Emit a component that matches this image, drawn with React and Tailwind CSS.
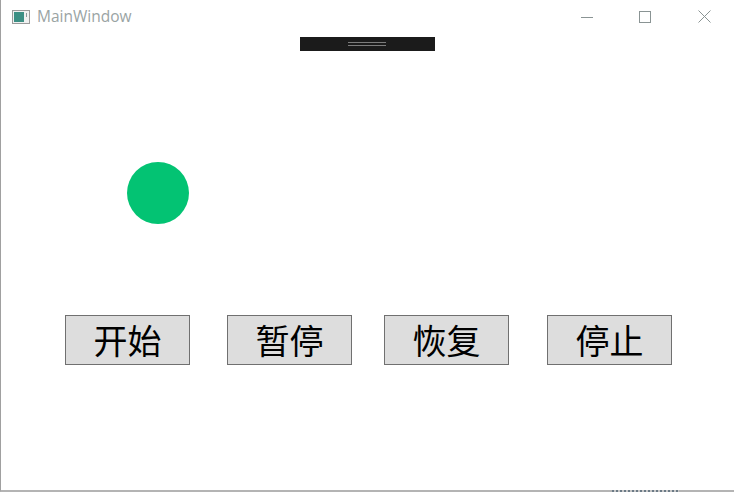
import React from "react";

function Btn({ children, className = "" }) {
  return (
    <button
      className={
        "w-[125px] h-[50px] bg-[#dddddd] border border-[#707070] flex items-center justify-center text-[34px] leading-none text-black " +
        className
      }
      style={{ fontFamily: '"Noto Sans CJK SC", "Microsoft YaHei", sans-serif' }}
    >
      {children}
    </button>
  );
}

export default function App() {
  return (
    <div className="w-[734px] h-[492px] bg-white flex flex-col overflow-hidden">
      <div className="flex-1 flex flex-col border-l border-[#a0a0a0] border-b-2 border-b-[#b4b4b4] relative">
        {/* title bar */}
        <div className="h-[33px] flex items-center shrink-0">
          <div className="ml-[11px] w-[18px] h-[14px] border border-[#9a9a9a] bg-[#f0f0f0] flex items-stretch p-[1px]">
            <div className="w-[10px] bg-[#3c8f84]" />
            <div className="w-[1px] ml-[2px] mt-[1px] mb-[5px] bg-[#8a9a9a]" />
          </div>
          <div
            className="ml-[7px] text-[15.5px] text-[#9aa4a4] leading-none"
            style={{ fontFamily: '"Open Sans", "Noto Sans", sans-serif' }}
          >
            MainWindow
          </div>
          <div className="ml-auto flex items-center">
            <svg width="12" height="12" viewBox="0 0 12 12" className="mr-[46px]">
              <line x1="0" y1="6.5" x2="12" y2="6.5" stroke="#8a9494" strokeWidth="1" />
            </svg>
            <svg width="12" height="12" viewBox="0 0 12 12" className="mr-[47px]">
              <rect x="0.5" y="0.5" width="11" height="11" fill="none" stroke="#8a9494" strokeWidth="1" />
            </svg>
            <svg width="13" height="13" viewBox="0 0 13 13" className="mr-[23px]">
              <line x1="0.5" y1="0.5" x2="12.5" y2="12.5" stroke="#8a9494" strokeWidth="1" />
              <line x1="12.5" y1="0.5" x2="0.5" y2="12.5" stroke="#8a9494" strokeWidth="1" />
            </svg>
          </div>
        </div>

        {/* dark handle bar */}
        <div className="mt-[4px] self-center ml-[-1px] w-[135px] h-[14px] bg-[#1b1b1b] flex flex-col items-center justify-center gap-[2px]">
          <div className="w-[38px] h-[1px] bg-[#7c7c7c]" />
          <div className="w-[38px] h-[1px] bg-[#7c7c7c]" />
        </div>

        {/* circle */}
        <div className="mt-[111px] ml-[126px] w-[62px] h-[62px] rounded-full bg-[#03c373]" />

        {/* buttons */}
        <div className="mt-[91px] flex items-center">
          <Btn className="ml-[64px]">开始</Btn>
          <Btn className="ml-[37px]">暂停</Btn>
          <Btn className="ml-[32px]">恢复</Btn>
          <Btn className="ml-[38px]">停止</Btn>
        </div>

        {/* bottom dotted grip */}
        <div className="absolute bottom-[-2px] left-[611px] w-[67px] h-[2px] bg-[repeating-linear-gradient(90deg,#6b7a86_0px,#6b7a86_2px,#c8c8c8_2px,#c8c8c8_4px)]" />
      </div>
    </div>
  );
}
